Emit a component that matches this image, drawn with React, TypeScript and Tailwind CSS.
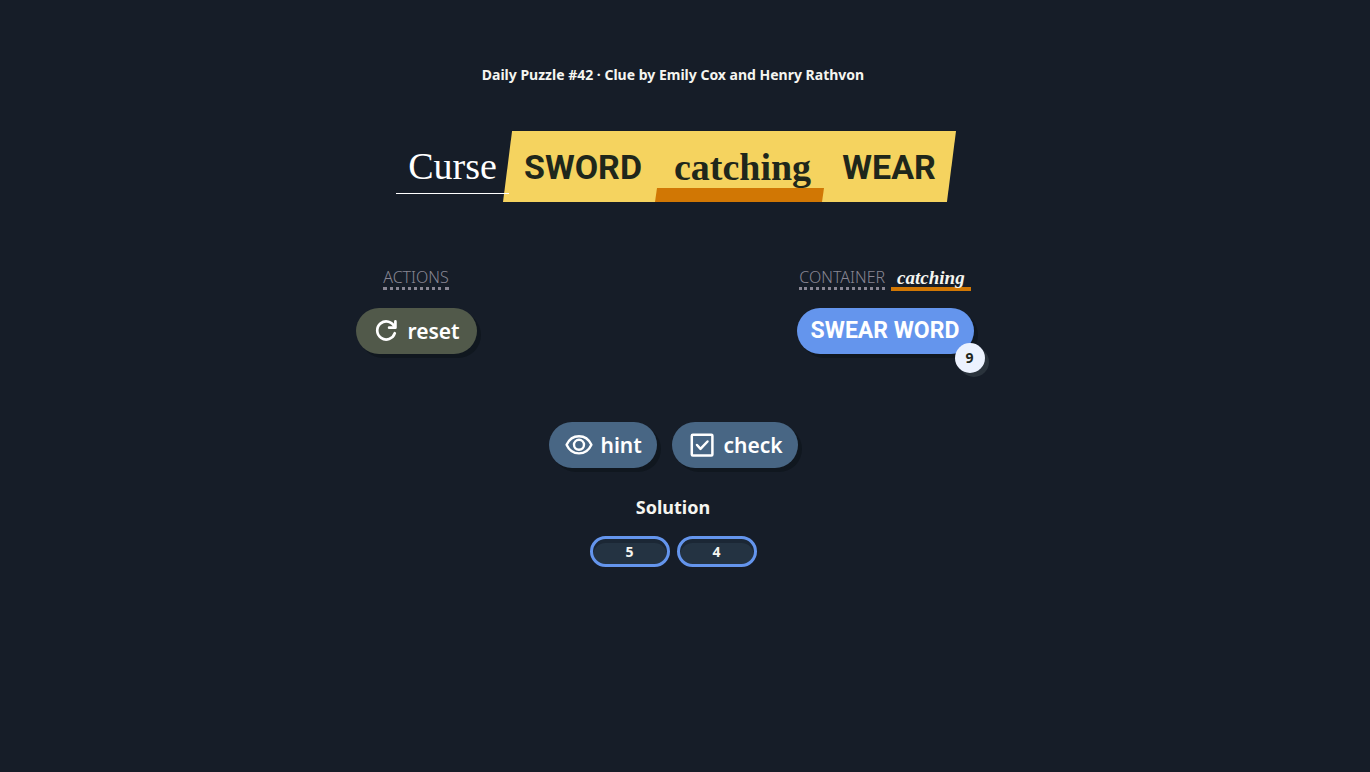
import type { ReactNode } from 'react';

function RedoIcon() {
  return (
    <svg viewBox="0 0 24 24" className="size-6" fill="none" stroke="currentColor" strokeWidth="2.7" strokeLinecap="round" strokeLinejoin="round" aria-hidden="true">
      <path d="M21.4 2.4v6.3h-6.3" />
      <path d="M20.6 8.2A9 9 0 1 0 20.8 14.2" />
    </svg>
  );
}

function EyeIcon() {
  return (
    <svg viewBox="0 0 28 22" className="h-[22px] w-7" fill="none" stroke="currentColor" strokeWidth="2.4" strokeLinejoin="round" aria-hidden="true">
      <path d="M1.6 10.8C4 5.4 8.5 2.2 14 2.2S24 5.4 26.4 10.8C24 16.2 19.5 19.4 14 19.4S4 16.2 1.6 10.8Z" />
      <circle cx="14" cy="10.8" r="5" />
    </svg>
  );
}

function CheckIcon() {
  return (
    <svg viewBox="0 0 24 24" className="size-6" fill="none" stroke="currentColor" strokeWidth="2.5" strokeLinejoin="round" strokeLinecap="round" aria-hidden="true">
      <rect x="1.8" y="1.8" width="20.6" height="20.6" rx="1" />
      <path d="M7 12l3.5 3.8L17.5 8.5" />
    </svg>
  );
}

function PillButton({ color, icon, children }: { color: string; icon: ReactNode; children: ReactNode }) {
  return (
    <button className={`flex h-[46px] items-center rounded-full text-[21px] font-semibold text-white shadow-[4px_4px_0_#10171f] ${color}`}>
      {icon}
      <span className="pt-0.5">{children}</span>
    </button>
  );
}

export default function App() {
  const lengths = [5, 4];

  return (
    <div className="min-h-screen bg-[#161d28] pt-16 pr-6 font-['Noto_Sans',sans-serif] text-[#f5f5f0]">
      <main className="flex flex-col items-center">
        <h1 className="text-sm leading-[22px] font-bold">
          Daily Puzzle #42 · Clue by Emily Cox and Henry Rathvon
        </h1>

        {/* Clue */}
        <div className="mt-[45px] flex h-[71px] items-stretch pl-1.5">
          <span className="z-10 -mr-1.5 flex h-[63px] w-[113px] items-center justify-center border-b border-white pt-2 font-['Liberation_Serif',serif] text-[38px] text-white">
            Curse
          </span>
          <div className="flex items-center bg-[#f5d35f] text-[#1f271b] [clip-path:polygon(2%_0,100%_0,98%_100%,0_100%)]">
            <span className="w-[152px] pt-0.5 pl-2 text-center font-[Roboto,sans-serif] text-[34px] font-bold">SWORD</span>
            <span className="relative flex h-full w-[169px] items-center justify-center pt-0.5 pl-1.5 font-['Liberation_Serif',serif] text-[38px] font-bold">
              <span className="absolute inset-x-0 bottom-0 h-3.5 bg-[#d17704] [clip-path:polygon(2px_0,100%_0,calc(100%-2px)_100%,0_100%)]" />
              <span className="relative">catching</span>
            </span>
            <span className="w-[132px] pt-0.5 pr-0.5 text-center font-[Roboto,sans-serif] text-[34px] font-bold">WEAR</span>
          </div>
        </div>

        {/* Moves */}
        <div className="mt-[66px] flex w-full max-w-[635px] items-start justify-between">
          <section className="flex flex-col items-center gap-[18px]">
            <h2 className="border-b-3 border-dotted border-[#888693] text-base leading-[19px] font-light text-[#888693]">ACTIONS</h2>
            <PillButton color="w-[121px] gap-2.5 bg-[#51594a] pl-[18px]" icon={<RedoIcon />}>reset</PillButton>
          </section>
          <section className="mr-[17px] flex flex-col items-center gap-[18px]">
            <h2 className="flex items-end gap-1.5 text-base leading-[19px]">
              <span className="border-b-3 border-dotted border-[#888693] font-light text-[#888693]">CONTAINER</span>
              <em className="-mb-px border-b-4 border-[#d17704] px-1.5 font-['Liberation_Serif',serif] text-[19px] leading-[19px] font-bold">catching</em>
            </h2>
            <div className="relative">
              <button className="block h-[46px] w-[177px] rounded-full bg-[#6495ed] font-[Roboto,sans-serif] text-[23px] font-bold text-white shadow-[4px_4px_0_#10171f]">
                SWEAR WORD
              </button>
              <span className="absolute -right-[11px] -bottom-[19px] flex size-[30px] items-center justify-center rounded-full bg-[#ecf2fe] text-sm font-bold text-[#1f271b] shadow-[4px_4px_0_#2a333c]">
                9
              </span>
            </div>
          </section>
        </div>

        <div className="mt-[68px] flex gap-[15px]">
          <PillButton color="w-[108px] gap-2 bg-[#486684] pl-4" icon={<EyeIcon />}>hint</PillButton>
          <PillButton color="w-[126px] gap-2.5 bg-[#486684] pl-[18px]" icon={<CheckIcon />}>check</PillButton>
        </div>

        {/* Solution */}
        <h2 className="mt-[25px] text-lg leading-7 font-bold">Solution</h2>
        <div className="mt-[15px] flex gap-[7px]">
          {lengths.map((length) => (
            <span key={length} className="flex h-[31px] w-20 items-center justify-center rounded-full border-3 border-[#6495ed] bg-[#243342] text-sm font-bold shadow-[inset_0_4px_0_#1b2735]">
              {length}
            </span>
          ))}
        </div>
      </main>
    </div>
  );
}
